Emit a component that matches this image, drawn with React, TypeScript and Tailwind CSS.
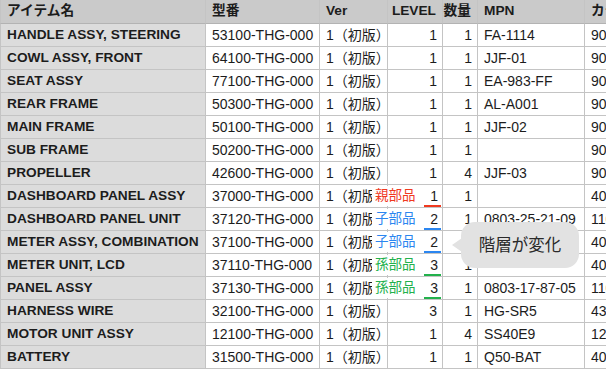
import React from "react";

type Mark = "parent" | "child" | "grandchild";

type Row = {
  name: string;
  part: string;
  level: number;
  qty: number;
  mpn: string;
  cat: string;
  mark?: Mark;
};

const rows: Row[] = [
  { name: "HANDLE ASSY, STEERING", part: "53100-THG-000", level: 1, qty: 1, mpn: "FA-1114", cat: "9000" },
  { name: "COWL ASSY, FRONT", part: "64100-THG-000", level: 1, qty: 1, mpn: "JJF-01", cat: "9000" },
  { name: "SEAT ASSY", part: "77100-THG-000", level: 1, qty: 1, mpn: "EA-983-FF", cat: "9000" },
  { name: "REAR FRAME", part: "50300-THG-000", level: 1, qty: 1, mpn: "AL-A001", cat: "9000" },
  { name: "MAIN FRAME", part: "50100-THG-000", level: 1, qty: 1, mpn: "JJF-02", cat: "9000" },
  { name: "SUB FRAME", part: "50200-THG-000", level: 1, qty: 1, mpn: "", cat: "9000" },
  { name: "PROPELLER", part: "42600-THG-000", level: 1, qty: 4, mpn: "JJF-03", cat: "9000" },
  { name: "DASHBOARD PANEL ASSY", part: "37000-THG-000", level: 1, qty: 1, mpn: "", cat: "4000", mark: "parent" },
  { name: "DASHBOARD PANEL UNIT", part: "37120-THG-000", level: 2, qty: 1, mpn: "0803-25-21-09", cat: "1100", mark: "child" },
  { name: "METER ASSY, COMBINATION", part: "37100-THG-000", level: 2, qty: 1, mpn: "", cat: "4000", mark: "child" },
  { name: "METER UNIT, LCD", part: "37110-THG-000", level: 3, qty: 1, mpn: "", cat: "4000", mark: "grandchild" },
  { name: "PANEL ASSY", part: "37130-THG-000", level: 3, qty: 1, mpn: "0803-17-87-05", cat: "1100", mark: "grandchild" },
  { name: "HARNESS WIRE", part: "32100-THG-000", level: 3, qty: 1, mpn: "HG-SR5", cat: "4300" },
  { name: "MOTOR UNIT ASSY", part: "12100-THG-000", level: 1, qty: 4, mpn: "SS40E9", cat: "1200" },
  { name: "BATTERY", part: "31500-THG-000", level: 1, qty: 1, mpn: "Q50-BAT", cat: "4000" },
];

const marks: Record<Mark, { label: string; text: string; line: string }> = {
  parent: { label: "親部品", text: "text-[#f0391f]", line: "border-[#f0391f]" },
  child: { label: "子部品", text: "text-[#2b86f0]", line: "border-[#2b86f0]" },
  grandchild: { label: "孫部品", text: "text-[#22b14c]", line: "border-[#22b14c]" },
};

const cols = "grid grid-cols-[206px_114px_68px_55px_35px_107px_100px]";
const cell = "flex items-center border-r border-b border-[#c4c4c4] px-[6px] whitespace-nowrap overflow-hidden";

export default function App() {
  return (
    <div
      className="relative h-[370px] w-[606px] overflow-hidden bg-white text-[14px] text-[#1c1c1c]"
      style={{ fontFamily: '"Liberation Sans", "Noto Sans CJK JP", sans-serif' }}
    >
      <div className={`${cols} h-[24px] bg-[#cacaca] text-[13.7px] font-bold`}>
        <div className={`${cell} border-l border-b-[#b3b3b3]`}>アイテム名</div>
        <div className={`${cell} border-b-[#b3b3b3]`}>型番</div>
        <div className={`${cell} border-b-[#b3b3b3]`}>Ver</div>
        <div className={`${cell} border-b-[#b3b3b3] justify-end px-[4px]`}>LEVEL</div>
        <div className={`${cell} border-b-[#b3b3b3] justify-end px-[4px]`}>数量</div>
        <div className={`${cell} border-b-[#b3b3b3]`}>MPN</div>
        <div className={`${cell} border-b-[#b3b3b3]`}>カテゴリ</div>
      </div>

      {rows.map((r) => {
        const m = r.mark ? marks[r.mark] : null;
        return (
          <div key={r.part} className={`${cols} h-[23px]`}>
            <div className={`${cell} border-l bg-[#dcdcdc] text-[13.7px] font-bold`}>{r.name}</div>
            <div className={cell}>{r.part}</div>
            <div className={`${cell} relative overflow-visible`}>
              1（初版）
              {m && (
                <span className={`absolute left-[52px] top-[1px] z-10 bg-white px-[3px] text-[13.5px] leading-[20px] ${m.text}`}>
                  {m.label}
                </span>
              )}
            </div>
            <div className={`${cell} justify-end pr-[1px]`}>
              {m ? (
                <span className={`mt-[1px] inline-block w-[17px] border-b-2 pr-[3px] text-right leading-[18px] ${m.line}`}>
                  {r.level}
                </span>
              ) : (
                <span className="pr-[4px]">{r.level}</span>
              )}
            </div>
            <div className={`${cell} justify-end pr-[5px]`}>{r.qty}</div>
            <div className={cell}>{r.mpn}</div>
            <div className={cell}>{r.cat}</div>
          </div>
        );
      })}

      <div className="absolute left-[452px] top-[222px] flex items-center">
        <svg width="10" height="14" viewBox="0 0 10 14" className="-mr-px">
          <path d="M10 0 L0 7 L10 14 Z" fill="#e2e2e2" />
        </svg>
        <div className="flex h-[46px] w-[118px] items-center justify-center rounded-[14px] bg-[#e2e2e2] text-[16.5px] text-[#2a2a2a]">
          階層が変化
        </div>
      </div>
    </div>
  );
}
